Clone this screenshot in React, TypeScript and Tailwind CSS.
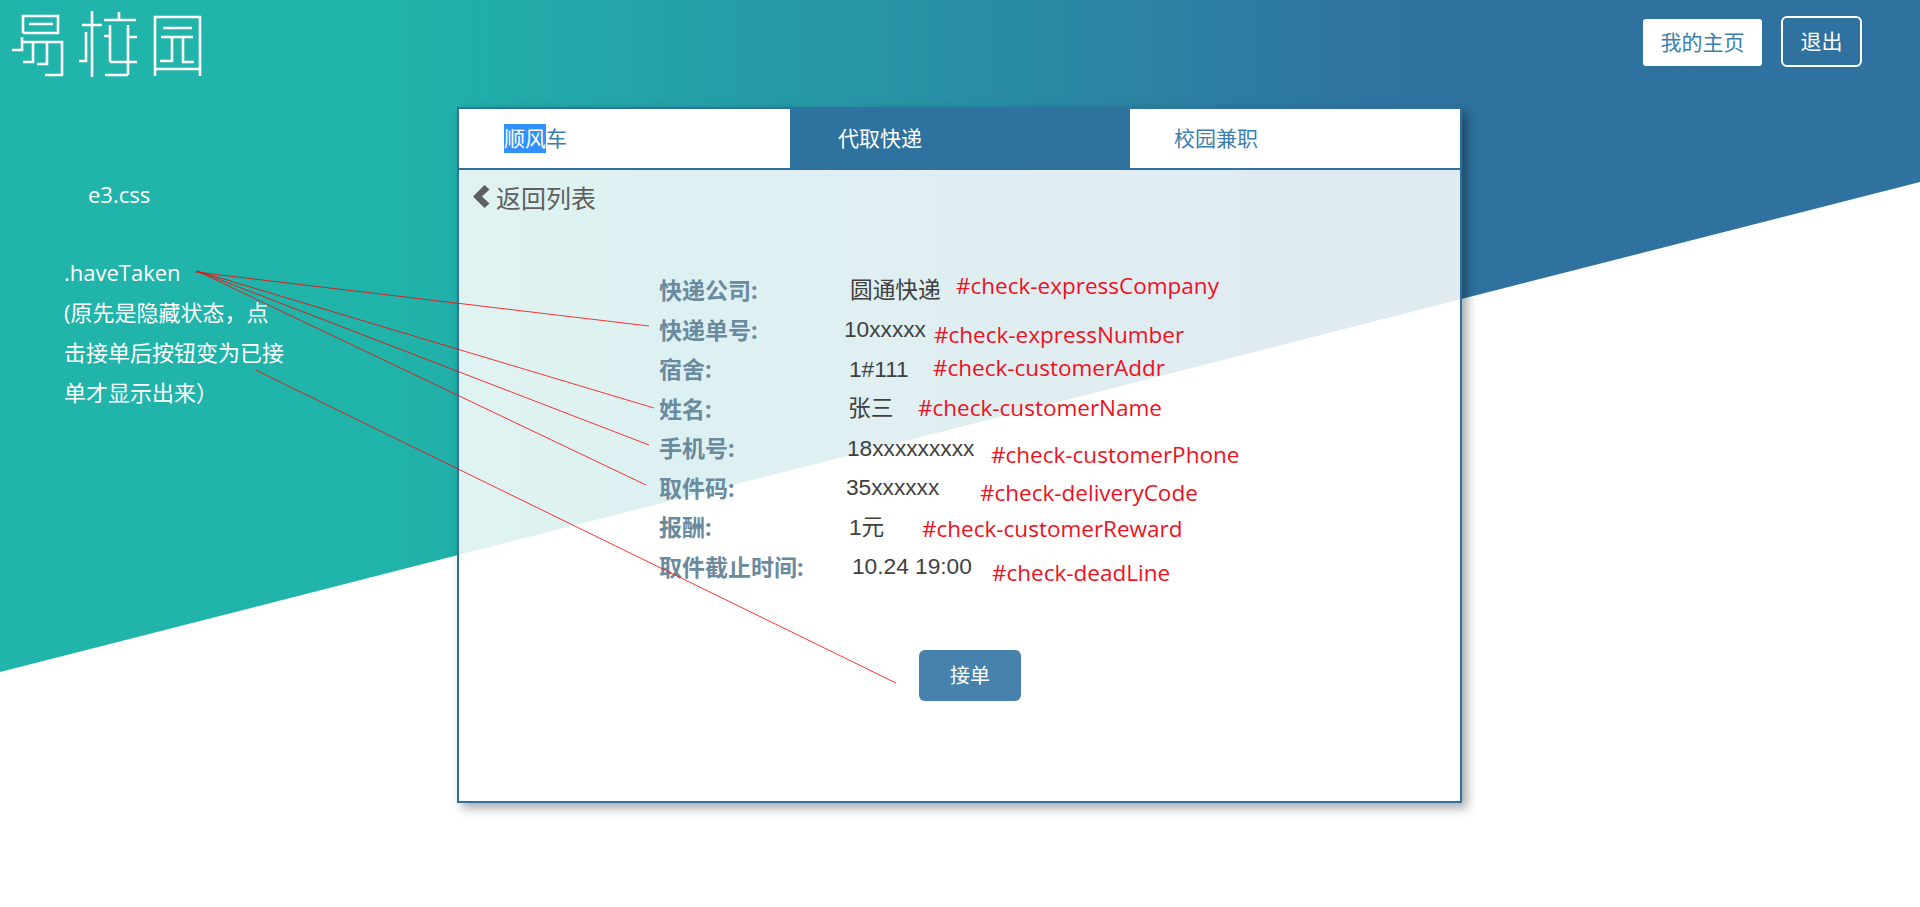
import React from "react";

const CJK = "font-['Open_Sans','Noto_Sans_CJK_SC',sans-serif]";
const VALUE = "font-['Liberation_Sans','Noto_Sans_CJK_SC',sans-serif]";

const rows = [
  { label: "快递公司:", value: "圆通快递", cls: "ml-[191px]" },
  { label: "快递单号:", value: "10xxxxx", cls: "ml-[185px]" },
  { label: "宿舍:", value: "1#111", cls: "ml-[190px]" },
  { label: "姓名:", value: "张三", cls: "ml-[189px]" },
  { label: "手机号:", value: "18xxxxxxxxx", cls: "ml-[188px]" },
  { label: "取件码:", value: "35xxxxxx", cls: "ml-[187px]" },
  { label: "报酬:", value: "1元", cls: "ml-[190px]" },
  { label: "取件截止时间:", value: "10.24 19:00", cls: "ml-[193px]" },
];

function Logo() {
  return (
    <svg width="210" height="90" viewBox="0 0 210 90" fill="none" stroke="#fff" strokeWidth="2.6" className="block">
      <path d="M23 33V16H58V33H23M29 24H53M12 50H22V37M22 42H62V75H45M33 42V62H23M47 43V64H37" />
      <path d="M92 11V77M82 25H102M86 32V61H79M119 12V20M104 20H136M110 25V62M104 36H110M128 25V75M128 37H137M110 62H137M105 75H128" />
      <path d="M155 76V17H200V76M155 69H200M163 28H192M161 37H193M172 37V61H160M183 37V62H194" />
    </svg>
  );
}

export default function App() {
  return (
    <div className={`relative h-[907px] w-[1920px] overflow-hidden bg-white ${CJK}`}>
      <div className="absolute left-0 top-0 h-[672px] w-full bg-[linear-gradient(90deg,#20b4aa_20%,#2f72a0_73%)] [clip-path:polygon(0_0,100%_0,100%_182px,0_100%)]" />

      <header className="relative flex h-[107px] items-start justify-between">
        <Logo />
        <div className="mr-[58px] mt-4 flex items-center gap-[19px]">
          <button className="mt-0.5 h-[47px] w-[119px] rounded-[3px] bg-white text-[21px] text-[#3b7eb0]">我的主页</button>
          <button className="h-[51px] w-[81px] rounded-md border-2 border-white text-[21px] text-white">退出</button>
        </div>
      </header>

      <main className="relative flex">
        <aside className="w-[457px] pl-[64px] text-[22px] text-white">
          <p className="ml-[24px] mt-[70px] h-[34px] leading-[34px]">e3.css</p>
          <p className="mt-[44px] h-[34px] text-[22px] leading-[34px]">.haveTaken</p>
          <p className="mt-[3px] w-[225px] leading-[40px]">(原先是隐藏状态，点击接单后按钮变为已接单才显示出来）</p>
        </aside>

        <section className="h-[696px] w-[1005px] border-2 border-[#2f72a0] bg-white/85 shadow-[5px_5px_10px_rgba(0,0,0,0.35)]">
          <nav className="flex h-[61px] border-b-2 border-[#2f72a0] text-[21px]">
            <div className="flex w-[331px] items-center bg-white pl-[45px] text-[#3b7eb0]">
              <span className="bg-[#3390ff] leading-[29px] text-white">顺风</span>
              <span>车</span>
            </div>
            <div className="flex w-[340px] items-center bg-[#2f72a0] pl-[48px] text-white">代取快递</div>
            <div className="flex flex-1 items-center bg-white pl-[44px] text-[#3b7eb0]">校园兼职</div>
          </nav>

          <div className="flex h-[58px] items-center pl-[14px] text-[25px] text-[#5f5f5f]">
            <svg width="18" height="23" viewBox="0 0 18 23" fill="#5f5f5f" className="mb-[5px] mr-[5px]">
              <path d="M11.5 0 L16.5 4.5 L9 11.5 L16.5 18.5 L11.5 23 L0 11.5 Z" />
            </svg>
            <span>返回列表</span>
          </div>

          <div className="ml-[200px] mt-[42px]">
            {rows.map((r) => (
              <div key={r.label} className="flex h-[39.5px] items-center">
                <span className="w-0 whitespace-nowrap pt-[1px] text-[23px] font-bold text-[#6a8a9e]">{r.label}</span>
                <span className={`${r.cls} whitespace-nowrap text-[22.7px] text-[#404040] ${VALUE}`}>{r.value}</span>
              </div>
            ))}
          </div>

          <div className="ml-[460px] mt-[64px] flex h-[51px] w-[102px] items-center justify-center rounded-md bg-[#4682ab] text-[20px] text-white">
            接单
          </div>
        </section>
      </main>

      <svg className="pointer-events-none absolute left-0 top-0" width="1920" height="907" fill="none" stroke="#f00" strokeWidth="0.8">
        <path d="M195 272L649 326M197 271L654 408M197 271L649 445M197 271L646 485M255.5 370L896 683" />
      </svg>

      <div className="pointer-events-none text-[22.5px] leading-[30px] text-[#f01020]">
        <span className="absolute left-[956px] top-[271px]">#check-expressCompany</span>
        <span className="absolute left-[934px] top-[320px]">#check-expressNumber</span>
        <span className="absolute left-[933px] top-[353px]">#check-customerAddr</span>
        <span className="absolute left-[918px] top-[393px]">#check-customerName</span>
        <span className="absolute left-[991px] top-[440px]">#check-customerPhone</span>
        <span className="absolute left-[980px] top-[478px]">#check-deliveryCode</span>
        <span className="absolute left-[922px] top-[514px]">#check-customerReward</span>
        <span className="absolute left-[992px] top-[558px]">#check-deadLine</span>
      </div>
    </div>
  );
}
